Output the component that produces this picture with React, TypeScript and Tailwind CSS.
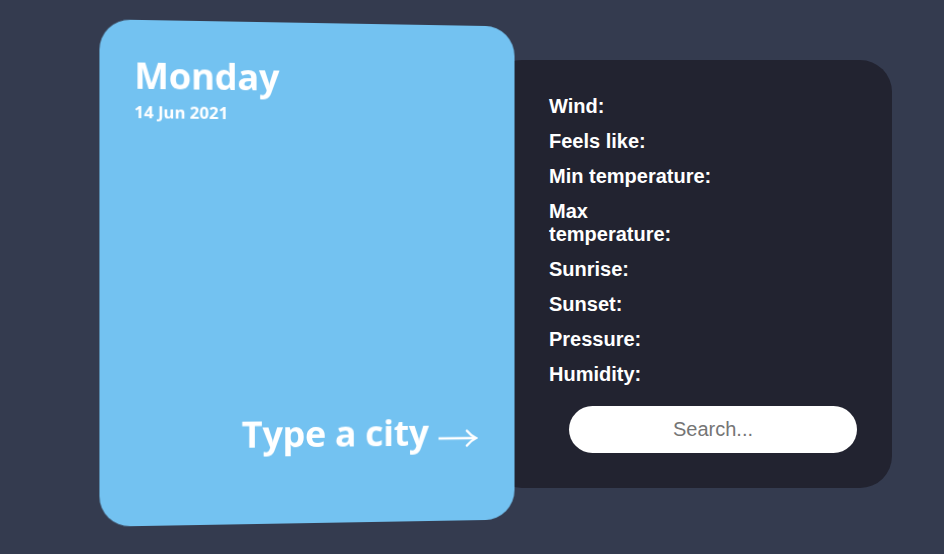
import React from "react";

const labels = [
  "Wind:",
  "Feels like:",
  "Min temperature:",
  "Max temperature:",
  "Sunrise:",
  "Sunset:",
  "Pressure:",
  "Humidity:",
];

export default function App() {
  return (
    <div className="w-[944px] h-[554px] bg-[#343b4f] overflow-hidden flex items-start pl-[102px]">
      <div
        className="relative z-10 mt-[23px] w-[416px] h-[500px] shrink-0 rounded-[30px] bg-[#73c2f1] [transform:perspective(1000px)_rotateY(4deg)] flex flex-col justify-between pl-[34px] pt-[37px] pr-[38px] pb-[71px] text-white"
        style={{ fontFamily: '"Open Sans", sans-serif' }}
      >
        <div>
          <div className="text-[36px] leading-none font-bold tracking-[-0.3px]">Monday</div>
          <div className="mt-[10px] text-[16.5px] leading-none font-bold">14 Jun 2021</div>
        </div>
        <div className="flex items-center justify-end gap-[10px]">
          <span className="text-[36px] leading-none font-bold tracking-[-0.3px]">Type a city</span>
          <svg width="40" height="18" viewBox="0 0 40 18" className="mt-[12px]">
            <path d="M0 9 H38" stroke="white" strokeWidth="2.6" fill="none" />
            <path d="M29 1.5 Q33 6.5 38.5 9 Q33 11.5 29 16.5" stroke="white" strokeWidth="2.4" fill="none" strokeLinecap="round" />
          </svg>
        </div>
      </div>
      <div
        className="-ml-[28px] mt-[60px] w-[402px] h-[428px] shrink-0 rounded-[32px] bg-[#222330] pl-[59px] pt-[35px] flex flex-col"
        style={{ fontFamily: '"Liberation Sans", Arial, sans-serif' }}
      >
        <ul className="w-[164px] flex flex-col gap-[12px] text-[20px] leading-[23px] font-bold text-white">
          {labels.map((l) => (
            <li key={l}>{l}</li>
          ))}
        </ul>
        <input
          placeholder="Search..."
          className="mt-[20px] ml-[20px] w-[288px] h-[47px] rounded-full bg-white text-center text-[20px] outline-none placeholder:text-[#757575]"
          style={{ fontFamily: '"Liberation Sans", Arial, sans-serif' }}
        />
      </div>
    </div>
  );
}
